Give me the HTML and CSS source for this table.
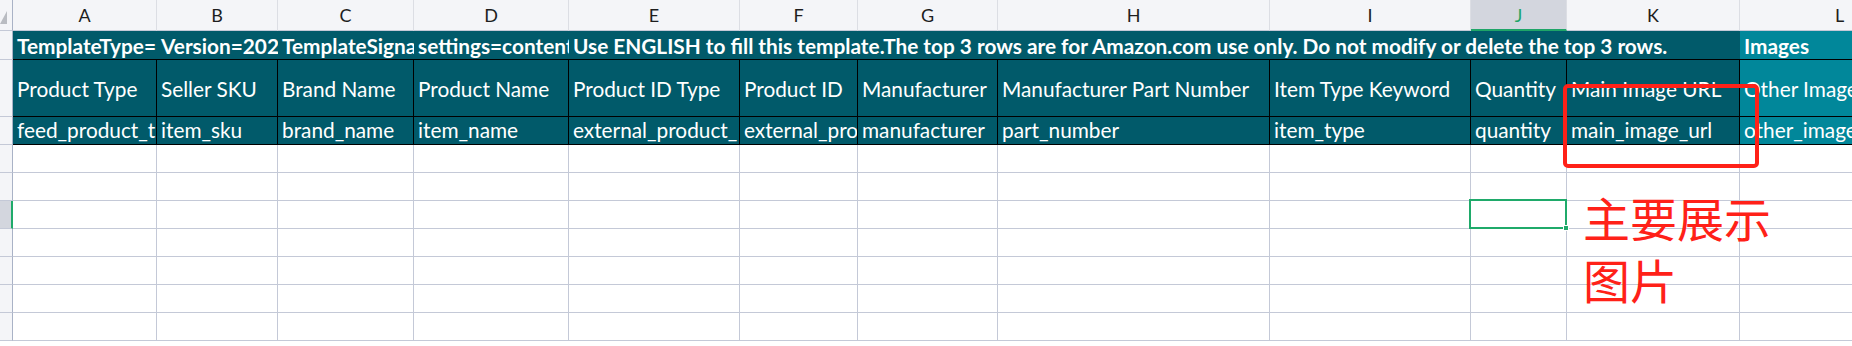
FILE: index.html
```html
<!DOCTYPE html>
<html lang="en">
<head>
<meta charset="utf-8">
<title>Sheet</title>
<link rel="stylesheet" href="styles.css">
</head>
<body>
<div class="sheet">
  <div class="row hdr">
    <div class="c corner"><span class="tri"></span></div>
    <div class="c">A</div><div class="c">B</div><div class="c">C</div><div class="c">D</div>
    <div class="c">E</div><div class="c">F</div><div class="c">G</div><div class="c">H</div>
    <div class="c">I</div><div class="c sel">J</div><div class="c">K</div><div class="c">L</div>
  </div>
  <div class="row r1">
    <div class="c rh"></div>
    <div class="c t">TemplateType=</div>
    <div class="c t">Version=2021</div>
    <div class="c t">TemplateSigna</div>
    <div class="c t">settings=content</div>
    <div class="c t wide">Use ENGLISH to fill this template.The top 3 rows are for Amazon.com use only. Do not modify or delete the top 3 rows.</div>
    <div class="c t lt">Images</div>
  </div>
  <div class="row r2">
    <div class="c rh"></div>
    <div class="c t">Product Type</div>
    <div class="c t">Seller SKU</div>
    <div class="c t">Brand Name</div>
    <div class="c t">Product Name</div>
    <div class="c t">Product ID Type</div>
    <div class="c t">Product ID</div>
    <div class="c t">Manufacturer</div>
    <div class="c t">Manufacturer Part Number</div>
    <div class="c t">Item Type Keyword</div>
    <div class="c t">Quantity</div>
    <div class="c t">Main Image URL</div>
    <div class="c t lt">Other Image</div>
  </div>
  <div class="row r3">
    <div class="c rh"></div>
    <div class="c t">feed_product_t</div>
    <div class="c t">item_sku</div>
    <div class="c t">brand_name</div>
    <div class="c t">item_name</div>
    <div class="c t">external_product_</div>
    <div class="c t">external_pro</div>
    <div class="c t">manufacturer</div>
    <div class="c t">part_number</div>
    <div class="c t">item_type</div>
    <div class="c t">quantity</div>
    <div class="c t">main_image_url</div>
    <div class="c t lt">other_image</div>
  </div>
  <div class="row"><div class="c rh"></div><div class="c"></div><div class="c"></div><div class="c"></div><div class="c"></div><div class="c"></div><div class="c"></div><div class="c"></div><div class="c"></div><div class="c"></div><div class="c"></div><div class="c"></div><div class="c"></div></div>
  <div class="row"><div class="c rh"></div><div class="c"></div><div class="c"></div><div class="c"></div><div class="c"></div><div class="c"></div><div class="c"></div><div class="c"></div><div class="c"></div><div class="c"></div><div class="c"></div><div class="c"></div><div class="c"></div></div>
  <div class="row"><div class="c rh selrow"></div><div class="c"></div><div class="c"></div><div class="c"></div><div class="c"></div><div class="c"></div><div class="c"></div><div class="c"></div><div class="c"></div><div class="c"></div><div class="c active"><span class="cursor"><span class="handle"></span></span></div><div class="c"></div><div class="c"></div></div>
  <div class="row"><div class="c rh"></div><div class="c"></div><div class="c"></div><div class="c"></div><div class="c"></div><div class="c"></div><div class="c"></div><div class="c"></div><div class="c"></div><div class="c"></div><div class="c"></div><div class="c"></div><div class="c"></div></div>
  <div class="row"><div class="c rh"></div><div class="c"></div><div class="c"></div><div class="c"></div><div class="c"></div><div class="c"></div><div class="c"></div><div class="c"></div><div class="c"></div><div class="c"></div><div class="c"></div><div class="c"></div><div class="c"></div></div>
  <div class="row"><div class="c rh"></div><div class="c"></div><div class="c"></div><div class="c"></div><div class="c"></div><div class="c"></div><div class="c"></div><div class="c"></div><div class="c"></div><div class="c"></div><div class="c"></div><div class="c"></div><div class="c"></div></div>
  <div class="row"><div class="c rh"></div><div class="c"></div><div class="c"></div><div class="c"></div><div class="c"></div><div class="c"></div><div class="c"></div><div class="c"></div><div class="c"></div><div class="c"></div><div class="c"></div><div class="c"></div><div class="c"></div></div>

  <div class="mark"></div>
  <div class="note">主要展示图片</div>
</div>
</body>
</html>
```

FILE: styles.css
```css
* { box-sizing: border-box; margin: 0; padding: 0; }
html, body { width: 1852px; height: 346px; overflow: hidden; background: #ffffff; }
body { font-family: Lato, "Noto Sans", sans-serif; }

.sheet { position: relative; width: 1852px; height: 346px; overflow: hidden; }

.row {
  display: grid;
  grid-template-columns: 13px 144px 121px 136px 155px 171px 118px 140px 272px 201px 96px 173px 200px;
  height: 28px;
}

.c {
  border-right: 1px solid #c4c9d7;
  border-bottom: 1px solid #c4c9d7;
  overflow: hidden;
  white-space: nowrap;
  position: relative;
}

.rh { background: #f4f5f8; border-right-color: #a9b2c6; }
.rh.selrow { background: #d3d6de; border-right: 2px solid #1faa6a; }

/* column header */
.hdr { height: 31px; background: #f4f5f8; }
.hdr .c {
  border-right-color: #dcdee4;
  border-bottom-color: #c4c9d7;
  text-align: center;
  font-size: 18px;
  line-height: 24px;
  padding-top: 3px;
  color: #1e1e1e;
}
.hdr .corner { border-right-color: #a9b2c6; display: flex; align-items: flex-start; padding-top: 11px; }
.tri {
  width: 0; height: 0;
  border-style: solid;
  border-width: 0 0 13px 7px;
  border-color: transparent transparent #b9bcc2 transparent;
}
.hdr .sel { background: #d3d6de; color: #1fa568; border-bottom: 2px solid #1fa568; }

/* teal rows */
.t {
  background: #015a6a;
  color: #ffffff;
  font-size: 20.8px;
  padding-left: 4px;
  border-right-color: #000;
  border-bottom-color: #000;
  display: flex;
  align-items: center;
}
.t.lt { background: #01879a; }

.r1 { height: 29px; }
.r1 .t { border-right: 0; font-weight: 700; }
.r1 .wide { grid-column: span 7; }

.r2 { height: 57px; }
.r2 .t { padding-top: 1px; }
.r3 .t { padding-bottom: 3px; }

/* active cell */
.cursor {
  position: absolute;
  left: -2px; top: -2px; right: -1px; bottom: -1px;
  border: 2px solid #1faa6a;
}
.active { overflow: visible; z-index: 2; }
.handle {
  position: absolute;
  right: -4px; bottom: -4px;
  width: 6px; height: 6px;
  background: #1faa6a;
  border: 1px solid #ffffff;
}

/* annotation overlay */
.mark {
  position: absolute;
  left: 1563px; top: 84px;
  width: 196px; height: 84px;
  border: 4px solid #ff2118;
  border-radius: 5px;
  z-index: 5;
}
.note {
  position: absolute;
  left: 1583px; top: 186px;
  width: 200px;
  font-family: "Noto Sans CJK SC", sans-serif;
  font-size: 47px;
  line-height: 62px;
  color: #ff2118;
  z-index: 5;
}
```
